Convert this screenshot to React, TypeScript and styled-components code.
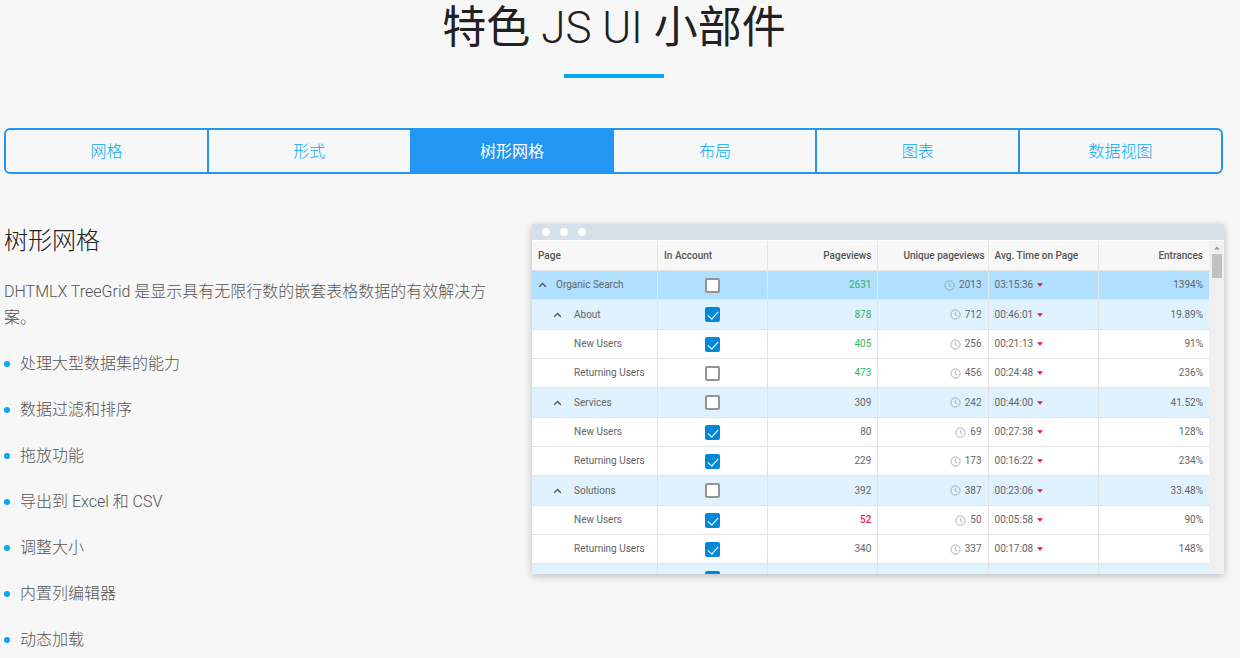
import React, { useState } from "react";
import styled, { createGlobalStyle } from "styled-components";

const GlobalStyle = createGlobalStyle`
  * { box-sizing: border-box; }
  body {
    margin: 0;
    background: #f7f7f7;
    color: #555;
    font-family: Roboto, "Noto Sans CJK SC", sans-serif;
    font-size: 16px;
    font-weight: 300;
    line-height: 26px;
  }
`;

const Page = styled.main`
  padding: 0 16px 4px 4px;
`;

const Title = styled.h1`
  margin: 0;
  padding-bottom: 18px;
  color: #212121;
  font-size: 44px;
  font-weight: 400;
  line-height: 56px;
  text-align: center;
`;

const Latin = styled.span`
  font-weight: 300;
`;

const Rule = styled.hr`
  width: 100px;
  height: 4px;
  margin: 0 auto 50px;
  border: 0;
  background: #03a9f4;
`;

const Tabs = styled.div`
  display: flex;
  margin-right: 1px;
`;

const Tab = styled.button<{ $active: boolean }>`
  flex: 1;
  height: 46px;
  padding: 2px 0 0;
  border: 2px solid #2196f3;
  background: ${(p) => (p.$active ? "#2196f3" : "transparent")};
  color: ${(p) => (p.$active ? "#fff" : "#03a9f4")};
  font: inherit;
  font-weight: ${(p) => (p.$active ? 400 : 300)};
  cursor: pointer;
  & + & { margin-left: -2px; }
  &:first-child { border-radius: 6px 0 0 6px; }
  &:last-child { border-radius: 0 6px 6px 0; }
`;

const Feature = styled.section`
  display: grid;
  grid-template-columns: 121fr 173fr;
  gap: 44px;
  align-items: start;
  padding-top: 50px;
`;

const Copy = styled.div`
  min-width: 0;
`;

const Heading = styled.h2`
  margin: 0 0 20px;
  color: #212121;
  font-size: 24px;
  font-weight: 300;
  line-height: 35px;
`;

const Lead = styled.p`
  margin: 0 0 20px;
`;

const Benefits = styled.ul`
  display: grid;
  gap: 20px;
  margin: 0;
  padding: 0;
  list-style: none;
`;

const Benefit = styled.li`
  display: flex;
  align-items: center;
  gap: 10px;
  &::before {
    content: "";
    width: 6px;
    height: 6px;
    border-radius: 50%;
    background: #03a9f4;
  }
`;

const Window = styled.div`
  min-width: 0;
  background: #fff;
  box-shadow: 0 2px 8px rgba(0, 0, 0, 0.25);
`;

const WindowBar = styled.div`
  display: flex;
  align-items: center;
  gap: 10px;
  height: 16px;
  padding-left: 10px;
  background: #d7dfe9;
`;

const Dot = styled.span`
  width: 8px;
  height: 8px;
  border-radius: 50%;
  background: #fff;
`;

const Viewport = styled.div`
  display: grid;
  grid-template-columns: minmax(0, 1fr) 15px;
  height: 334px;
  padding-top: 1px;
  overflow: hidden;
`;

const Grid = styled.table`
  width: 100%;
  align-self: start;
  table-layout: fixed;
  border-collapse: separate;
  border-spacing: 0;
  color: #666;
  font-size: 10px;
  font-weight: 400;
  line-height: 16px;
`;

const Col = styled.col<{ $wide?: boolean }>`
  width: ${(p) => (p.$wide ? "126px" : "auto")};
`;

const Th = styled.th<{ $right?: boolean; $tight?: boolean }>`
  height: 30px;
  padding: 0 ${(p) => (p.$tight ? 3 : 6)}px;
  border-right: 1px solid #e4e4e4;
  border-bottom: 1px solid #e4e4e4;
  background: #f7f7f7;
  color: #555;
  font-weight: 500;
  text-align: ${(p) => (p.$right ? "right" : "left")};
  white-space: nowrap;
  &:last-child { border-right: 0; }
`;

const rowColor = { 0: "#b1dffe", 1: "#dff2fd", 2: "#fff" } as const;

const Row = styled.tr<{ $level: 0 | 1 | 2 }>`
  height: 29px;
  background: ${(p) => rowColor[p.$level]};
  &:nth-child(3n + 2) { height: 30px; }
`;

const Td = styled.td<{ $align?: "right" | "center"; $tone?: "up" | "down" }>`
  padding: 0 6px;
  border-right: 1px solid #e4e4e4;
  border-bottom: 1px solid #e4e4e4;
  text-align: ${(p) => p.$align ?? "left"};
  color: ${(p) => (p.$tone === "up" ? "#2fb56a" : p.$tone === "down" ? "#e91e55" : "inherit")};
  font-weight: ${(p) => (p.$tone === "down" ? 500 : 400)};
  white-space: nowrap;
  &:last-child { border-right: 0; }
`;

const Branch = styled.div<{ $level: 0 | 1 | 2 }>`
  display: flex;
  align-items: center;
  gap: ${(p) => (p.$level === 0 ? 9 : 12)}px;
  padding-left: ${(p) => [0, 15, 36][p.$level]}px;
`;

const Toggle = styled.button`
  display: flex;
  padding: 0;
  border: 0;
  background: none;
  color: #555;
  cursor: pointer;
`;

const Check = styled.input`
  appearance: none;
  display: block;
  width: 15px;
  height: 15px;
  margin: 0 auto;
  border: 2px solid #949494;
  border-radius: 2px;
  background: #fff;
  &:checked {
    border-color: #0288d9;
    background: #0288d9;
  }
  &:checked::after {
    content: "";
    display: block;
    width: 9px;
    height: 5px;
    margin: 2px 0 0 1px;
    border: solid #fff;
    border-width: 0 0 1px 1px;
    transform: rotate(-48deg);
  }
`;

const Iconed = styled.span`
  display: inline-flex;
  align-items: center;
  gap: 4px;
  vertical-align: middle;
`;

const Scroller = styled.div`
  display: flex;
  flex-direction: column;
  align-items: center;
  padding: 4px 0;
  background: #f0f0f0;
`;

const Arrow = styled.button`
  display: flex;
  padding: 0;
  border: 0;
  background: none;
`;

const Thumb = styled.div`
  width: 10px;
  height: 24px;
  margin: 3px 0 auto;
  background: #c1c1c1;
`;

const Chevron = () => (
  <svg width="9" height="8" viewBox="0 0 9 8" fill="none" stroke="currentColor" strokeWidth="1.4">
    <path d="M1.2 5.8 4.5 2.5 7.8 5.8" />
  </svg>
);

const Clock = () => (
  <svg width="11" height="11" viewBox="0 0 11 11" fill="none" stroke="#8a949b" strokeOpacity="0.7">
    <circle cx="5.5" cy="5.5" r="4.6" />
    <path d="M5.3 2.8V5.7L7.3 7" />
  </svg>
);

const Drop = () => (
  <svg width="6" height="4" viewBox="0 0 6 4">
    <path d="M0 .3H6L3 3.7Z" fill="#e6154f" />
  </svg>
);

type Item = {
  name?: string;
  level: 0 | 1 | 2;
  on: boolean;
  views?: number;
  tone?: "up" | "down";
  unique?: number;
  time?: string;
  entrances?: string;
};

const items: Item[] = [
  { name: "Organic Search", level: 0, on: false, views: 2631, tone: "up", unique: 2013, time: "03:15:36", entrances: "1394%" },
  { name: "About", level: 1, on: true, views: 878, tone: "up", unique: 712, time: "00:46:01", entrances: "19.89%" },
  { name: "New Users", level: 2, on: true, views: 405, tone: "up", unique: 256, time: "00:21:13", entrances: "91%" },
  { name: "Returning Users", level: 2, on: false, views: 473, tone: "up", unique: 456, time: "00:24:48", entrances: "236%" },
  { name: "Services", level: 1, on: false, views: 309, unique: 242, time: "00:44:00", entrances: "41.52%" },
  { name: "New Users", level: 2, on: true, views: 80, unique: 69, time: "00:27:38", entrances: "128%" },
  { name: "Returning Users", level: 2, on: true, views: 229, unique: 173, time: "00:16:22", entrances: "234%" },
  { name: "Solutions", level: 1, on: false, views: 392, unique: 387, time: "00:23:06", entrances: "33.48%" },
  { name: "New Users", level: 2, on: true, views: 52, tone: "down", unique: 50, time: "00:05:58", entrances: "90%" },
  { name: "Returning Users", level: 2, on: true, views: 340, unique: 337, time: "00:17:08", entrances: "148%" },
  { level: 1, on: true },
];

const tabs = ["网格", "形式", "树形网格", "布局", "图表", "数据视图"];

const benefits = [
  "处理大型数据集的能力",
  "数据过滤和排序",
  "拖放功能",
  "导出到 Excel 和 CSV",
  "调整大小",
  "内置列编辑器",
  "动态加载",
];

function TreeGrid() {
  return (
    <Window>
      <WindowBar>
        <Dot />
        <Dot />
        <Dot />
      </WindowBar>
      <Viewport>
        <Grid>
          <colgroup>
            <Col $wide />
            <Col />
            <Col />
            <Col />
            <Col />
            <Col />
          </colgroup>
          <thead>
            <tr>
              <Th>Page</Th>
              <Th>In Account</Th>
              <Th $right>Pageviews</Th>
              <Th $right $tight>Unique pageviews</Th>
              <Th>Avg. Time on Page</Th>
              <Th $right>Entrances</Th>
            </tr>
          </thead>
          <tbody>
            {items.map((item, i) => (
              <Row key={i} $level={item.level}>
                <Td>
                  {item.name && (
                    <Branch $level={item.level}>
                      {item.level < 2 && (
                        <Toggle aria-label={item.name}>
                          <Chevron />
                        </Toggle>
                      )}
                      {item.name}
                    </Branch>
                  )}
                </Td>
                <Td $align="center">
                  <Check type="checkbox" aria-label={item.name ?? "In Account"} defaultChecked={item.on} />
                </Td>
                <Td $align="right" $tone={item.tone}>{item.views}</Td>
                <Td $align="right">
                  {item.unique && (
                    <Iconed>
                      <Clock />
                      {item.unique}
                    </Iconed>
                  )}
                </Td>
                <Td>
                  {item.time && (
                    <Iconed>
                      {item.time}
                      <Drop />
                    </Iconed>
                  )}
                </Td>
                <Td $align="right">{item.entrances}</Td>
              </Row>
            ))}
          </tbody>
        </Grid>
        <Scroller>
          <Arrow aria-label="Up">
            <svg width="6" height="6" viewBox="0 0 6 6">
              <path d="M0 4.5H6L3 1.5Z" fill="#999" />
            </svg>
          </Arrow>
          <Thumb />
          <Arrow aria-label="Down">
            <svg width="6" height="6" viewBox="0 0 6 6">
              <path d="M0 1H6L3 4Z" fill="#444" />
            </svg>
          </Arrow>
        </Scroller>
      </Viewport>
    </Window>
  );
}

export default function App() {
  const [active, setActive] = useState(2);
  return (
    <Page lang="zh-CN">
      <GlobalStyle />
      <Title>
        特色 <Latin>JS UI</Latin> 小部件
      </Title>
      <Rule />
      <Tabs role="tablist">
        {tabs.map((tab, i) => (
          <Tab key={tab} role="tab" aria-selected={i === active} $active={i === active} onClick={() => setActive(i)}>
            {tab}
          </Tab>
        ))}
      </Tabs>
      <Feature>
        <Copy>
          <Heading>树形网格</Heading>
          <Lead>DHTMLX TreeGrid 是显示具有无限行数的嵌套表格数据的有效解决方案。</Lead>
          <Benefits>
            {benefits.map((text) => (
              <Benefit key={text}>{text}</Benefit>
            ))}
          </Benefits>
        </Copy>
        <TreeGrid />
      </Feature>
    </Page>
  );
}
